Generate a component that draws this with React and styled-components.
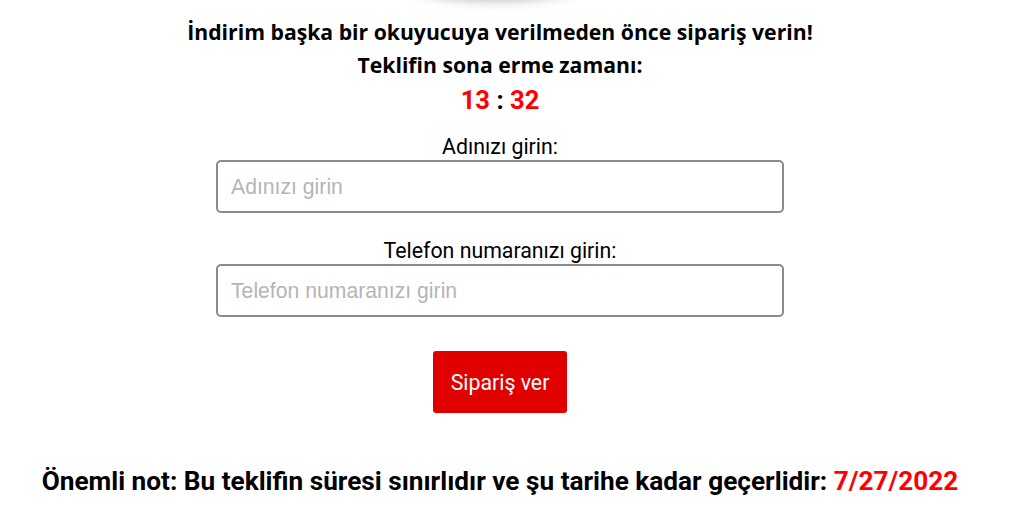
import React from "react";
import styled, { createGlobalStyle } from "styled-components";

const Global = createGlobalStyle`
  html, body { margin: 0; padding: 0; background: #fff; }
  body { font-family: Roboto, "Liberation Sans", sans-serif; color: #000; overflow: hidden; }
`;

const Page = styled.div`
  width: 1000px;
  display: flex;
  flex-direction: column;
  align-items: center;
`;

const ShadowBlob = styled.div`
  width: 180px;
  height: 40px;
  margin-top: -46px;
  margin-right: 10px;
  margin-bottom: 21px;
  border-radius: 50%;
  background: #fff;
  box-shadow: 0 6px 12px rgba(0, 0, 0, 0.3);
`;

const Headline = styled.h2`
  margin: 0;
  font-family: "Open Sans", sans-serif;
  font-weight: 700;
  font-size: 21.2px;
  line-height: 33px;
  text-align: center;
`;

const Timer = styled.div`
  margin-top: 4px;
  font-family: Roboto, sans-serif;
  font-weight: 700;
  font-size: 25.6px;
  line-height: 30px;
  color: #000;
`;

const Digits = styled.span`
  color: #ff0000;
`;

const Form = styled.form`
  margin-top: 19px;
  display: flex;
  flex-direction: column;
  align-items: center;
`;

const Field = styled.label`
  display: flex;
  flex-direction: column;
  align-items: center;
  & + & { margin-top: 25px; }
`;

const LabelText = styled.span`
  font-family: Roboto, sans-serif;
  font-size: 21.3px;
  line-height: 25px;
`;

const Input = styled.input`
  box-sizing: border-box;
  width: 568px;
  height: 53px;
  margin: 1px 0 0;
  padding: 0 13px;
  border: 2px solid #8a8a8a;
  border-radius: 5px;
  font-family: "Liberation Sans", Arial, sans-serif;
  font-size: 21.2px;
  outline: none;
  &::placeholder { color: #b5b5b5; }
`;

const Button = styled.button`
  margin-top: 34px;
  width: 134px;
  height: 62px;
  border: none;
  border-radius: 3px;
  background: #e10000;
  color: #fff;
  font-family: Roboto, sans-serif;
  font-size: 21.3px;
  cursor: pointer;
`;

const Note = styled.p`
  margin: 53px 0 0;
  font-family: Roboto, sans-serif;
  font-weight: 700;
  font-size: 26.2px;
  line-height: 30px;
  text-align: center;
  white-space: nowrap;
`;

const RedText = styled.span`
  color: #ff0000;
`;

export default function App() {
  return (
    <Page>
      <Global />
      <ShadowBlob />
      <Headline>
        İndirim başka bir okuyucuya verilmeden önce sipariş verin!
        <br />
        Teklifin sona erme zamanı:
      </Headline>
      <Timer>
        <Digits>13</Digits> : <Digits>32</Digits>
      </Timer>
      <Form onSubmit={(e) => e.preventDefault()}>
        <Field>
          <LabelText>Adınızı girin:</LabelText>
          <Input type="text" placeholder="Adınızı girin" />
        </Field>
        <Field>
          <LabelText>Telefon numaranızı girin:</LabelText>
          <Input type="tel" placeholder="Telefon numaranızı girin" />
        </Field>
        <Button type="submit">Sipariş ver</Button>
      </Form>
      <Note>
        Önemli not: Bu teklifin süresi sınırlıdır ve şu tarihe kadar geçerlidir:{" "}
        <RedText>7/27/2022</RedText>
      </Note>
    </Page>
  );
}
